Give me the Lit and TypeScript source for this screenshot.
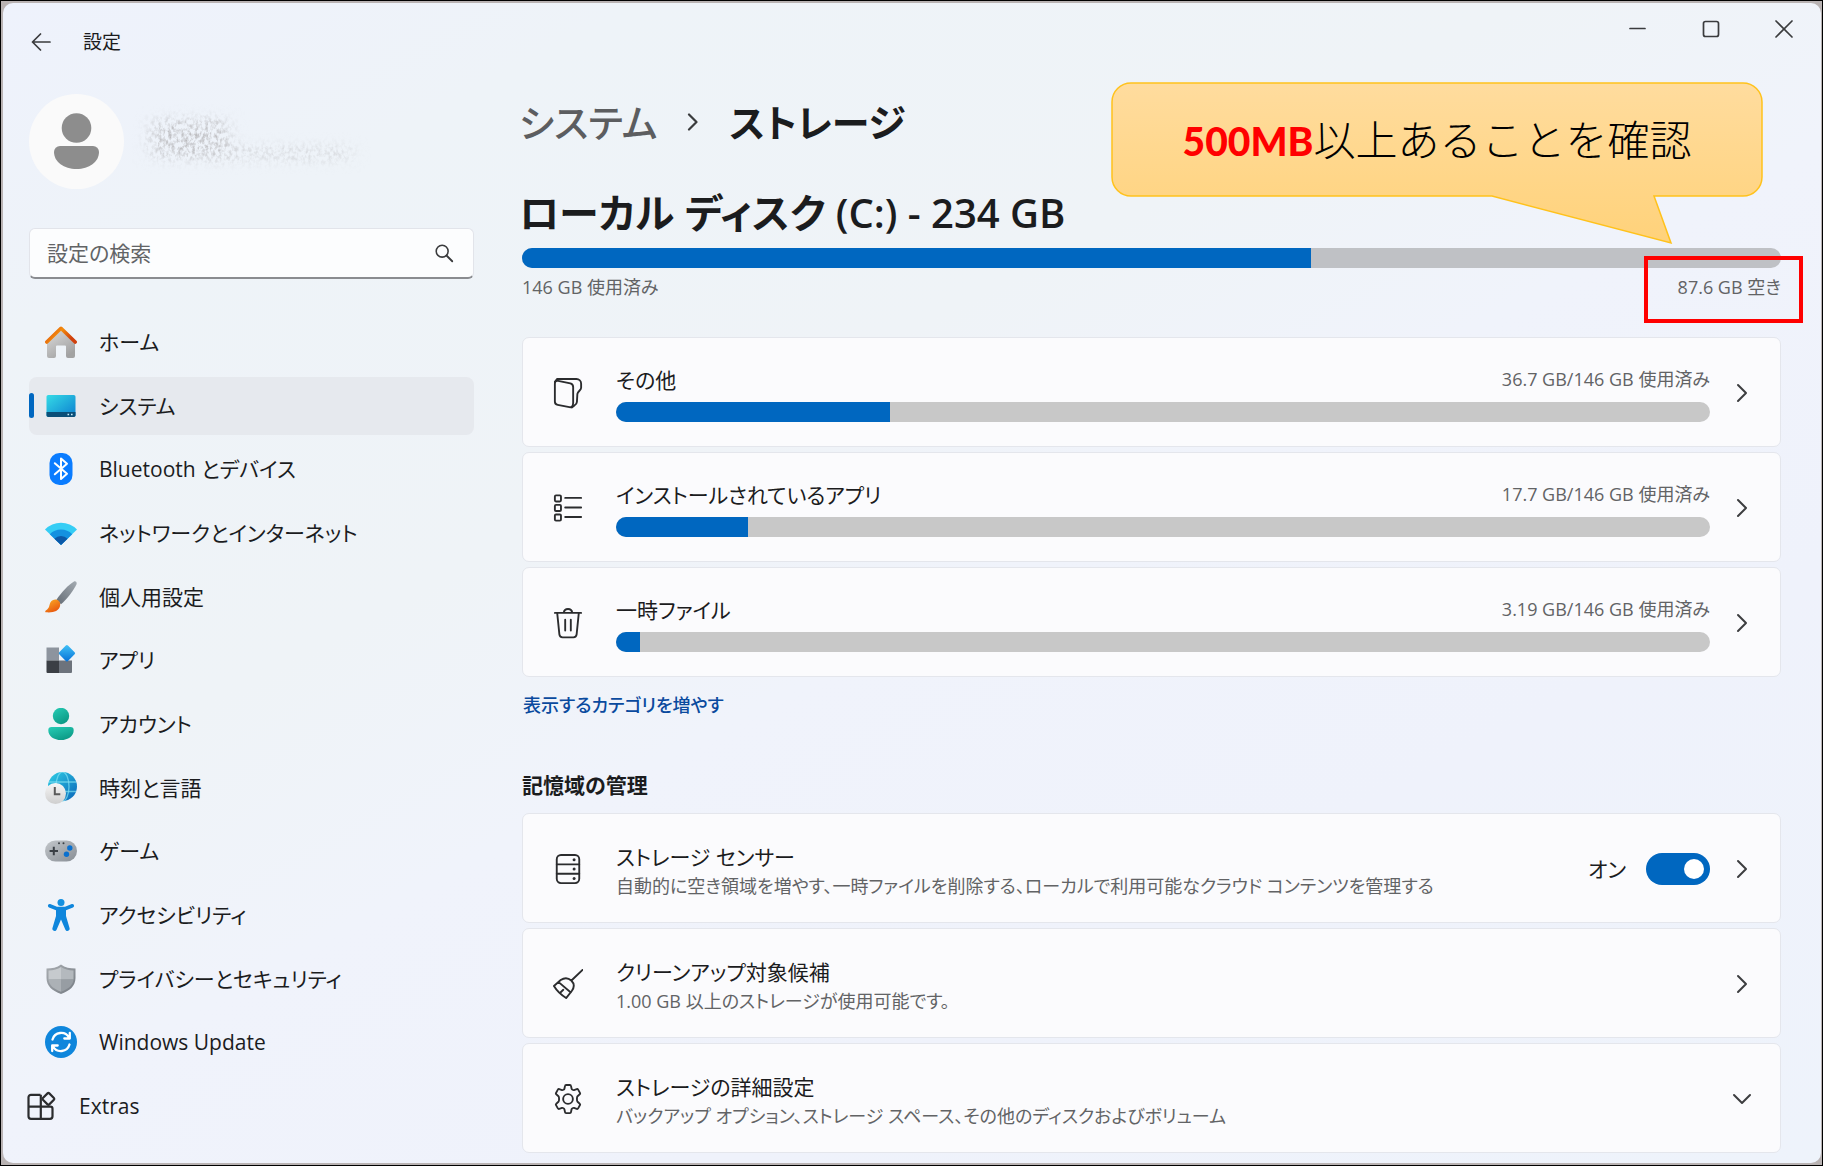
import { LitElement, html, css, svg, nothing } from "lit";
import type { TemplateResult } from "lit";
import { customElement, state } from "lit/decorators.js";
import { classMap } from "lit/directives/class-map.js";
import { styleMap } from "lit/directives/style-map.js";

interface NavEntry {
  label: string;
  icon: TemplateResult;
  extra?: boolean;
}

interface UsageEntry {
  label: string;
  usage: string;
  percent: number;
  icon: TemplateResult;
}

const icon = (content: TemplateResult, cls = "nav-icon") =>
  html`<svg class=${cls} viewBox="0 0 32 32" aria-hidden="true">${content}</svg>`;

const homeIcon = icon(svg`
  <defs>
    <linearGradient id="hr" x1="0" y1="0" x2="1" y2="0.4"><stop offset="0" stop-color="#d9480f"/><stop offset=".5" stop-color="#f38b0c"/><stop offset="1" stop-color="#d0400c"/></linearGradient>
    <linearGradient id="hb" x1="0" y1="0" x2="0.6" y2="1"><stop offset="0" stop-color="#dedede"/><stop offset="1" stop-color="#a2a2a2"/></linearGradient>
  </defs>
  <path d="M2 14 16 3l14 11v16a2 2 0 0 1-2 2h-5a2 2 0 0 1-2-2V20.500a1 1 0 0 0-1-1h-8a1 1 0 0 0-1 1V30a2 2 0 0 1-2 2H4a2 2 0 0 1-2-2Z" fill="url(#hb)"/>
  <path d="M1.800 16 16 2.300 30.200 16" fill="none" stroke="url(#hr)" stroke-width="3.600" stroke-linecap="round" stroke-linejoin="round"/>`);

const systemIcon = icon(svg`
  <defs><linearGradient id="sy" x1="0" y1="0" x2="1" y2="1"><stop offset="0" stop-color="#35dbe6"/><stop offset="1" stop-color="#0c7fd0"/></linearGradient></defs>
  <rect x="1.500" y="5" width="29" height="22" rx="1.800" fill="url(#sy)"/>
  <path d="M1.500 22h29v3.200a1.800 1.800 0 0 1-1.800 1.800H3.300a1.800 1.800 0 0 1-1.800-1.800Z" fill="#0b4f78"/>
  <path d="M22.500 24.500h1.600M26 24.500h1.600" stroke="#c9eefb" stroke-width="1.400"/>`);

const bluetoothIcon = icon(svg`
  <rect x="4.500" y="0" width="23" height="32" rx="10" fill="#0a7cff"/>
  <path d="M9.800 10.200 22 20.800 16 26V5.500l6 5.200L9.800 21.300" fill="none" stroke="#fff" stroke-width="2" stroke-linejoin="round" stroke-linecap="round"/>`);

const networkIcon = icon(svg`
  <path d="M0 12.500a22.500 22.500 0 0 1 32 0L16 28Z" fill="#35cdf5"/>
  <path d="M4.800 17.200a15.800 15.800 0 0 1 22.400 0L16 28Z" fill="#1491e0"/>
  <path d="M9.400 21.700a9.400 9.400 0 0 1 13.200 0L16 28Z" fill="#0c59a8"/>`);

const personalizeIcon = icon(svg`
  <defs>
    <linearGradient id="pb" x1="1" y1="0" x2="0" y2="1"><stop offset="0" stop-color="#a4abb2"/><stop offset="1" stop-color="#646c75"/></linearGradient>
    <linearGradient id="po" x1="0" y1="0" x2="0.6" y2="1"><stop offset="0" stop-color="#fbb128"/><stop offset="1" stop-color="#e8570e"/></linearGradient>
  </defs>
  <path d="M29 .500c1.700-.700 3.200.800 2.500 2.700C29 9 22 18 16 23.300l-4.500-4.600C16 12 23.500 3.600 29 .500Z" fill="url(#pb)"/>
  <path d="M10.800 18.600c3.300.400 5.200 3.600 4.200 6.600-1.400 4.600-6.500 6.800-14 6.100-1-.100-1-1.400-.200-1.900 2-1.100 3.200-2.400 3.700-5.300.700-3.500 3-5.900 6.300-5.500Z" fill="url(#po)"/>`);

const appsIcon = icon(svg`
  <defs><linearGradient id="ap" x1="0" y1="0" x2="1" y2="1"><stop offset="0" stop-color="#41c3f8"/><stop offset="1" stop-color="#0670d6"/></linearGradient></defs>
  <path d="M1.500 3.500h12.500v13H1.500Z" fill="#8d949e"/>
  <path d="M1.500 16.500h12.500v12.500H2.500a1 1 0 0 1-1-1Z" fill="#3b3f45"/>
  <path d="M14 16.500h13V28a1 1 0 0 1-1 1H14Z" fill="#6d737c"/>
  <rect x="15.700" y="3" width="12.400" height="12.400" rx="1.500" transform="rotate(45 21.900 9.200)" fill="url(#ap)"/>`);

const accountIcon = icon(svg`
  <defs><linearGradient id="ac" x1="0" y1="0" x2="0.600" y2="1"><stop offset="0" stop-color="#27cdb6"/><stop offset="1" stop-color="#0c9a86"/></linearGradient></defs>
  <circle cx="16" cy="8" r="8.200" fill="url(#ac)"/>
  <path d="M6.500 19h19a3.200 3.200 0 0 1 3.200 3.200c0 6-5.700 9.800-12.700 9.800S3.300 28.200 3.300 22.200A3.200 3.200 0 0 1 6.500 19Z" fill="url(#ac)"/>`);

const timeIcon = icon(svg`
  <defs>
    <linearGradient id="tg" x1="0" y1="0" x2="1" y2="1"><stop offset="0" stop-color="#2fd0e6"/><stop offset="1" stop-color="#0a63b8"/></linearGradient>
    <linearGradient id="tc" x1="0" y1="0" x2="0" y2="1"><stop offset="0" stop-color="#f6f6f6"/><stop offset="1" stop-color="#cfcfcf"/></linearGradient>
  </defs>
  <circle cx="17.500" cy="14.500" r="14.500" fill="url(#tg)"/>
  <path d="M4 10h27M4 19.500h27" stroke="#7fe0f2" stroke-width="1.300" opacity=".7"/>
  <ellipse cx="17.500" cy="14.500" rx="6.500" ry="14.500" fill="none" stroke="#7fe0f2" stroke-width="1.300" opacity=".7"/>
  <circle cx="10.500" cy="21.500" r="10.500" fill="url(#tc)"/>
  <path d="M9.800 15v7.300h5.500" fill="none" stroke="#5a5a5a" stroke-width="2"/>`);

const gameIcon = icon(svg`
  <defs><linearGradient id="gm" x1="0" y1="0" x2="1" y2="1"><stop offset="0" stop-color="#c3c7cb"/><stop offset="1" stop-color="#878d94"/></linearGradient></defs>
  <rect x="0" y="5.500" width="32" height="21" rx="10.500" fill="url(#gm)"/>
  <path d="M4.600 16h8.400M8.800 11.800v8.400" stroke="#3a3f45" stroke-width="2"/>
  <circle cx="24.800" cy="13" r="2.700" fill="#0a70cf"/><circle cx="21.500" cy="19.300" r="2.700" fill="#0a70cf"/>
  <circle cx="14" cy="8.200" r="1" fill="#3a3f45"/><circle cx="18.500" cy="8.200" r="1" fill="#3a3f45"/>`);

const accessIcon = icon(svg`
  <circle cx="16" cy="3.500" r="3.500" fill="#1390e0"/>
  <path d="M5.200 5.100 12 7.700h8l6.800-2.600c2.200-.700 3.200 2.500 1.200 3.400L21 11.300V17l3.600 12.300c.500 2.500-3.100 3.700-4.200 1.400L16 20.500l-4.400 10.200c-1.100 2.300-4.700 1.100-4.200-1.400L11 17v-5.700L4 8.500c-2-.900-1-4.100 1.200-3.400Z" fill="#0f86dc"/>`);

const shieldIcon = icon(svg`
  <defs><linearGradient id="sh" x1="0" y1="0" x2="1" y2="1"><stop offset="0" stop-color="#a9adb2"/><stop offset="1" stop-color="#757b82"/></linearGradient></defs>
  <path d="M16 1.500c4 3 9 4 14.500 4V15c0 8-6 13-14.500 16C7.500 28 1.500 23 1.500 15V5.500c5.500 0 10.500-1 14.500-4Z" fill="url(#sh)"/>
  <path d="M16 4v12.500H3.500v-9C8.500 7.300 12.500 6.300 16 4Z" fill="#c6cace"/>
  <path d="M16 4v12.500h12.500v-9C23.500 7.300 19.500 6.300 16 4Z" fill="#b4b9be"/>
  <path d="M3.500 16.500H16v12.300C9 26.200 4 22.500 3.500 16.500Z" fill="#acb1b6"/>
  <path d="M28.500 16.500H16v12.300c7-2.600 12-6.300 12.500-12.300Z" fill="#979da3"/>`);

const updateIcon = icon(svg`
  <circle cx="16" cy="16" r="16" fill="#0f86dc"/>
  <g fill="none" stroke="#fff" stroke-width="2.300" stroke-linecap="round" stroke-linejoin="round">
    <path d="M7.500 13.500A9 9 0 0 1 24 11.500M24.800 7v5.500h-5.500"/>
    <path d="M24.500 18.500A9 9 0 0 1 8 20.500M7.200 25v-5.500h5.500"/>
  </g>`);

const extrasIcon = icon(svg`
  <g fill="none" stroke="#2b2c2e" stroke-width="2.200" stroke-linejoin="round">
    <path d="M15.500 4.800H6A2.500 2.500 0 0 0 3.500 7.300v19A2.500 2.500 0 0 0 6 28.800h19a2.500 2.500 0 0 0 2.500-2.500v-7.600a2 2 0 0 0-2-2h-22M15.800 4.800v24"/>
    <path d="M22.500 3.400a1.300 1.300 0 0 1 1.800 0l4.600 4.600a1.300 1.300 0 0 1 0 1.800l-4.600 4.600a1.300 1.300 0 0 1-1.800 0l-4.600-4.600a1.300 1.300 0 0 1 0-1.800Z"/>
  </g>`);

const line = (content: TemplateResult) => icon(content, "line-icon");

const otherIcon = line(svg`
  <path d="M2 4.200 4.500 1H25a5 5 0 0 1 5 5v4.500c0 2.500-3.500 3.500-4 6.500l-.500 8.500c0 2-1.500 3-3 4l-2.500 2"/>
  <path d="M2 6c0-2.200 1.300-3.400 3.500-3l13 2.800A4 4 0 0 1 21.500 9.500v17c0 3.200-1.500 5-4 4.600L5 28.600a3.500 3.500 0 0 1-3-3.500Z"/>`);

const listIcon = line(svg`
  <rect x="2" y="2.500" width="6.500" height="6.500" rx="1.200"/><rect x="2" y="12.700" width="6.500" height="6.500" rx="1.200"/><rect x="2" y="22.900" width="6.500" height="6.500" rx="1.200"/>
  <path d="M13 5.200h17M13 15.400h17M13 25.600h17"/>`);

const trashIcon = line(svg`
  <path d="M2 5.200h28M11.500 5c.300-2.600 2-4 4.500-4s4.200 1.400 4.500 4M4.500 5.500l2.300 22.700a3.500 3.500 0 0 0 3.400 3.100h11.600a3.500 3.500 0 0 0 3.400-3.100l2.300-22.700M13 12.500v11.500M19 12.500v11.500"/>`);

const driveIcon = line(svg`
  <rect x="4" y="1" width="24" height="30" rx="4.500"/><path d="M4 11h24M4 21h24"/>
  <g fill="#2b2c2e" stroke="none"><circle cx="22.500" cy="6" r="1.600"/><circle cx="22.500" cy="16" r="1.600"/><circle cx="22.500" cy="26" r="1.600"/></g>`);

const broomIcon = line(svg`
  <path d="M31.500 1 20.500 11.500M1 18.200 8.200 11.800C12.500 8.800 16.500 9.500 19.500 12.300c3 3 3.500 7.200.500 11.200L14 31C9 27.800 4 23.200 1 18.200ZM6 14l13 11M8.500 24.500l2.500-2.300"/>`);

const gearIcon = line(svg`
  <circle cx="16" cy="16" r="5.200"/>
  <path d="M14 1h4c.600 0 1.100.400 1.200 1l.600 3c.200.900 1.700 1.800 2.600 1.500l2.900-1c.600-.200 1.200 0 1.500.500l2 3.500c.300.500.200 1.100-.300 1.500l-2.300 2c-.900.900-.900 5.100 0 6l2.300 2c.500.400.600 1 .300 1.500l-2 3.500c-.300.500-.900.700-1.500.500l-2.900-1c-.900-.300-2.400.600-2.600 1.500l-.600 3c-.100.600-.600 1-1.200 1h-4c-.600 0-1.100-.400-1.200-1l-.600-3c-.200-.900-1.700-1.800-2.600-1.500l-2.900 1c-.600.200-1.200 0-1.500-.500l-2-3.500c-.300-.500-.200-1.100.300-1.500l2.300-2c.900-.900.900-5.100 0-6l-2.300-2c-.500-.400-.600-1-.300-1.500l2-3.500c.300-.500.900-.700 1.500-.500l2.900 1c.900.300 2.400-.600 2.600-1.500l.600-3c.100-.600.600-1 1.200-1Z"/>`);

const chevronRight = html`<svg class="chevron" viewBox="0 0 20 20" aria-hidden="true"><path d="M6 2l8 8-8 8" /></svg>`;
const chevronDown = html`<svg class="chevron" viewBox="0 0 20 20" aria-hidden="true"><path d="M2 6l8 8 8-8" /></svg>`;

@customElement("app-root")
export class AppRoot extends LitElement {
  @state() private selected = 1;
  @state() private senseOn = true;

  private readonly nav: NavEntry[] = [
    { label: "ホーム", icon: homeIcon },
    { label: "システム", icon: systemIcon },
    { label: "Bluetooth とデバイス", icon: bluetoothIcon },
    { label: "ネットワークとインターネット", icon: networkIcon },
    { label: "個人用設定", icon: personalizeIcon },
    { label: "アプリ", icon: appsIcon },
    { label: "アカウント", icon: accountIcon },
    { label: "時刻と言語", icon: timeIcon },
    { label: "ゲーム", icon: gameIcon },
    { label: "アクセシビリティ", icon: accessIcon },
    { label: "プライバシーとセキュリティ", icon: shieldIcon },
    { label: "Windows Update", icon: updateIcon },
    { label: "Extras", icon: extrasIcon, extra: true },
  ];

  private readonly usage: UsageEntry[] = [
    { label: "その他", usage: "36.7 GB/146 GB 使用済み", percent: 25, icon: otherIcon },
    { label: "インストールされているアプリ", usage: "17.7 GB/146 GB 使用済み", percent: 12.1, icon: listIcon },
    { label: "一時ファイル", usage: "3.19 GB/146 GB 使用済み", percent: 2.2, icon: trashIcon },
  ];

  static styles = css`
    :host {
      display: block;
      font-family: "Open Sans", "Noto Sans CJK JP", sans-serif;
      font-feature-settings: "palt";
      font-size: 21px;
      line-height: 30px;
      color: #1b1c1e;
    }
    * {
      box-sizing: border-box;
    }
    button,
    input {
      font: inherit;
      font-feature-settings: inherit;
      color: inherit;
    }
    button {
      border: 0;
      padding: 0;
      background: none;
      text-align: left;
      cursor: pointer;
    }
    h1, h2, h3 {
      margin: 0;
      font-weight: inherit;
      font-size: inherit;
    }
    .frame {
      min-height: 100vh;
      display: flex;
      border: 1px solid #000;
      padding: 2px 1px 2px 2px;
      background: #b9b3b3;
    }
    .window {
      position: relative;
      flex: 1;
      min-width: 0;
      display: flex;
      flex-direction: column;
      border-radius: 10px;
      background: linear-gradient(152deg, #eef2fc 0%, #eef3f8 16%, #eff3f7 38%, #f0f3fb 52%, #eff2fb 72%, #eef3fb 100%);
    }
    .titlebar {
      display: flex;
      align-items: flex-start;
      height: 77px;
      padding-right: 1px;
    }
    .back {
      display: grid;
      place-items: center;
      width: 76px;
      height: 77px;
    }
    .back svg {
      width: 20px;
      height: 18px;
    }
    .titlebar h1 {
      flex: 1;
      padding-left: 4px;
      font-size: 19px;
      line-height: 78px;
    }
    .caption-button {
      display: grid;
      place-items: center;
      width: 73px;
      height: 52px;
    }
    .caption-button svg {
      width: 18px;
      height: 18px;
    }
    .stroke {
      fill: none;
      stroke: #3a3b3d;
      stroke-width: 1.700;
      stroke-linecap: round;
      stroke-linejoin: round;
    }
    .body {
      flex: 1;
      display: grid;
      grid-template-columns: 445px minmax(0, 1fr);
      column-gap: 48px;
      padding: 0 40px 8px 26px;
    }
    .sidebar {
      display: flex;
      flex-direction: column;
      padding: 14px 0 20px;
    }
    .profile {
      display: flex;
      align-items: center;
      gap: 8px;
      margin-bottom: 39px;
    }
    .avatar {
      width: 95px;
      height: 95px;
    }
    .redacted {
      width: 250px;
      height: 80px;
    }
    .search {
      display: flex;
      align-items: center;
      height: 51px;
      margin-bottom: 34px;
      padding: 0 18px 0 17px;
      border: 1px solid #e2e4ea;
      border-bottom: 2px solid #8a8c90;
      border-radius: 6px;
      background: #fcfdfe;
    }
    .search input {
      flex: 1;
      min-width: 0;
      border: 0;
      padding: 0;
      outline: 0;
      background: none;
    }
    .search input::placeholder {
      color: #626466;
      opacity: 1;
    }
    .search svg {
      width: 22px;
      height: 22px;
    }
    .nav {
      flex: 1;
      display: flex;
      flex-direction: column;
      justify-content: space-between;
    }
    .nav-item {
      display: flex;
      align-items: center;
      gap: 22px;
      height: 58px;
      padding-left: 16px;
      border-radius: 8px;
      color: inherit;
      text-decoration: none;
    }
    .nav-item.extra {
      padding-left: 0;
      margin-left: -4px;
    }
    .nav-item.selected {
      background: #e6e9ee;
    }
    .nav-item.selected::before {
      content: "";
      width: 5px;
      height: 25px;
      margin: 0 -11px 0 -16px;
      border-radius: 3px;
      background: #0067c0;
    }
    .nav-icon {
      flex: none;
      width: 32px;
      height: 32px;
    }
    .breadcrumb {
      display: flex;
      align-items: center;
      gap: 27px;
      padding-top: 12px;
      font-size: 38px;
      line-height: 60px;
    }
    .breadcrumb,
    .drive {
      margin-left: -3px;
    }
    .breadcrumb a {
      color: #5c5d60;
      text-decoration: none;
      font-weight: 500;
    }
    .breadcrumb svg {
      width: 18px;
      height: 18px;
    }
    .current {
      font-weight: 600;
    }
    .drive {
      margin-top: 31px;
      font-size: 40px;
      line-height: 60px;
      font-weight: 600;
    }
    .meter {
      display: block;
      height: 20px;
      border-radius: 10px;
      overflow: hidden;
      background: #c8c8c8;
    }
    .meter.total {
      margin: 5px 0;
      background: #bfc1c5;
    }
    .meter-fill {
      display: block;
      height: 100%;
      background: #0067c0;
    }
    .legend {
      display: flex;
      justify-content: space-between;
    }
    .small {
      font-size: 18px;
      line-height: 28px;
      color: #626365;
    }
    .free {
      position: relative;
    }
    .highlight {
      position: absolute;
      top: -17px;
      right: -22px;
      width: 159px;
      height: 67px;
      border: 4px solid #f00;
    }
    .cards {
      display: flex;
      flex-direction: column;
      gap: 5px;
    }
    .usage-cards {
      margin-top: 36px;
    }
    .card {
      display: grid;
      grid-template-columns: 93px minmax(0, 1fr) auto 64px;
      align-items: center;
      width: 100%;
      height: 110px;
      padding: 2px 6px 0 0;
      border: 1px solid #e4e6ec;
      border-radius: 7px;
      background: #fbfbfd;
    }
    .line-icon {
      width: 30px;
      height: 32px;
      margin-left: 30px;
      fill: none;
      stroke: #2b2c2e;
      stroke-width: 2;
      stroke-linecap: round;
      stroke-linejoin: round;
    }
    .chevron {
      justify-self: center;
      display: block;
      width: 20px;
      height: 20px;
      margin: 0 auto;
      fill: none;
      stroke: #3c3d3f;
      stroke-width: 2;
      stroke-linecap: round;
      stroke-linejoin: round;
    }
    .text {
      display: flex;
      flex-direction: column;
    }
    .setting-text {
      padding-top: 3px;
    }
    .usage-text {
      gap: 7px;
      grid-column: 2 / 4;
    }
    .usage-head {
      display: flex;
      justify-content: space-between;
    }
    .more {
      display: block;
      width: fit-content;
      margin: 14px 0 0 1px;
      font-size: 18px;
      line-height: 28px;
      font-weight: 500;
      color: #0a4a9e;
      text-decoration: none;
    }
    .section-title {
      margin: 51px 0 13px;
      font-weight: 600;
    }
    .toggle {
      display: flex;
      align-items: center;
      gap: 20px;
    }
    .toggle input {
      appearance: none;
      width: 64px;
      height: 32px;
      margin: 0;
      padding: 6px;
      border-radius: 16px;
      background: #8a8c90;
      display: flex;
      align-items: center;
      cursor: pointer;
    }
    .toggle input::before {
      content: "";
      width: 20px;
      height: 20px;
      border-radius: 50%;
      background: #fff;
    }
    .toggle input:checked {
      justify-content: flex-end;
      background: #0067c0;
    }
    .callout {
      position: absolute;
      top: 79px;
      right: 57px;
      width: 654px;
      height: 163px;
      font-family: "Noto Sans CJK JP", sans-serif;
      font-feature-settings: normal;
      font-size: 42px;
      font-weight: 300;
      line-height: 112px;
      text-align: center;
      color: #000;
    }
    .callout svg {
      position: absolute;
      inset: 0;
      width: 654px;
      height: 163px;
    }
    .callout p {
      position: relative;
      margin: 0;
    }
    .callout strong {
      font-family: Lato, sans-serif;
      font-size: 39px;
      font-weight: 900;
      color: #f00;
    }
  `;

  private renderNavItem(item: NavEntry, index: number) {
    const selected = index === this.selected;
    return html`<a
      href="#"
      class=${classMap({ "nav-item": true, selected, extra: !!item.extra })}
      aria-current=${selected ? "page" : nothing}
      @click=${(e: Event) => {
        e.preventDefault();
        this.selected = index;
      }}
      >${item.icon}<span>${item.label}</span></a
    >`;
  }

  private renderMeter(percent: number, label: string, total = false) {
    return html`<span
      class=${classMap({ meter: true, total })}
      role="progressbar"
      aria-label=${label}
      aria-valuenow=${percent}
      ><span class="meter-fill" style=${styleMap({ width: `${percent}%` })}></span
    ></span>`;
  }

  private renderUsage(item: UsageEntry) {
    return html`<button class="card" type="button">
      ${item.icon}
      <span class="text usage-text">
        <span class="usage-head"><span>${item.label}</span><span class="small">${item.usage}</span></span>
        ${this.renderMeter(item.percent, item.label)}
      </span>
      ${chevronRight}
    </button>`;
  }

  render() {
    return html`
      <div class="frame">
        <div class="window">
          <header class="titlebar">
            <button class="back" type="button" aria-label="戻る">
              <svg class="stroke" viewBox="0 0 20 18"><path d="M19 9H1.500M9.500 1 1.500 9l8 8" /></svg>
            </button>
            <h1>設定</h1>
            <button class="caption-button" type="button" aria-label="最小化">
              <svg class="stroke" viewBox="0 0 18 18"><path d="M1 8.500h15" /></svg>
            </button>
            <button class="caption-button" type="button" aria-label="最大化">
              <svg class="stroke" viewBox="0 0 18 18"><rect x="1.500" y="1.500" width="15" height="15" rx="2" /></svg>
            </button>
            <button class="caption-button" type="button" aria-label="閉じる">
              <svg class="stroke" viewBox="0 0 18 18"><path d="M1 1l16 16M17 1 1 17" /></svg>
            </button>
          </header>

          <div class="body">
            <aside class="sidebar">
              <div class="profile">
                <svg class="avatar" viewBox="0 0 95 95" aria-hidden="true">
                  <circle cx="47.500" cy="47.500" r="47.500" fill="#fafafa" />
                  <circle cx="47.500" cy="34" r="14.800" fill="#8d8d8d" />
                  <path d="M31 52h33a6 6 0 0 1 6 6c0 10-10 17-22.500 17S25 68 25 58a6 6 0 0 1 6-6Z" fill="#8d8d8d" />
                </svg>
                <svg class="redacted" viewBox="0 0 250 80" aria-hidden="true">
                  <defs>
                    <filter id="grain" filterUnits="userSpaceOnUse" x="0" y="0" width="250" height="80">
                      <feTurbulence type="fractalNoise" baseFrequency="0.3 0.22" numOctaves="3" seed="4" result="n" />
                      <feColorMatrix in="n" values="0 0 0 0 .5  0 0 0 0 .5  0 0 0 0 .52  2.600 0 0 0 -1.050" result="g" />
                      <feGaussianBlur in="SourceGraphic" stdDeviation="9 7" result="s" />
                      <feComposite in="g" in2="s" operator="in" />
                    </filter>
                  </defs>
                  <g filter="url(#grain)">
                    <rect x="20" y="18" width="76" height="38" />
                    <rect x="70" y="46" width="150" height="11" opacity=".7" />
                  </g>
                </svg>
              </div>

              <label class="search">
                <input type="text" aria-label="設定の検索" placeholder="設定の検索" />
                <svg class="stroke" viewBox="0 0 24 24" aria-hidden="true">
                  <circle cx="10" cy="10" r="6.500" /><path d="m15 15 6 6" stroke-width="2" />
                </svg>
              </label>

              <nav class="nav" aria-label="設定">${this.nav.map((item, i) => this.renderNavItem(item, i))}</nav>
            </aside>

            <main>
              <div class="breadcrumb">
                <a href="#">システム</a>
                <svg class="stroke" viewBox="0 0 18 18" aria-hidden="true"><path d="M5 1.500 12.500 9 5 16.500" stroke-width="2.200" /></svg>
                <span class="current">ストレージ</span>
              </div>
              <h2 class="drive">ローカル ディスク (C:) - 234 GB</h2>
              ${this.renderMeter(62.7, "ローカル ディスク (C:)", true)}
              <div class="legend small">
                <span>146 GB 使用済み</span>
                <span class="free">87.6 GB 空き<span class="highlight"></span></span>
              </div>

              <div class="cards usage-cards">${this.usage.map((item) => this.renderUsage(item))}</div>
              <a class="more" href="#">表示するカテゴリを増やす</a>

              <h3 class="section-title">記憶域の管理</h3>
              <div class="cards">
                <div class="card">
                  ${driveIcon}
                  <span class="text setting-text">
                    <span>ストレージ センサー</span>
                    <span class="small">自動的に空き領域を増やす、一時ファイルを削除する、ローカルで利用可能なクラウド コンテンツを管理する</span>
                  </span>
                  <label class="toggle"
                    ><span>${this.senseOn ? "オン" : "オフ"}</span
                    ><input
                      type="checkbox"
                      role="switch"
                      aria-label="ストレージ センサー"
                      .checked=${this.senseOn}
                      @change=${(e: Event) => (this.senseOn = (e.target as HTMLInputElement).checked)}
                  /></label>
                  <button type="button" aria-label="ストレージ センサーを開く">${chevronRight}</button>
                </div>
                <button class="card" type="button">
                  ${broomIcon}
                  <span class="text setting-text">
                    <span>クリーンアップ対象候補</span>
                    <span class="small">1.00 GB 以上のストレージが使用可能です。</span>
                  </span>
                  <span></span>${chevronRight}
                </button>
                <button class="card" type="button" aria-expanded="false">
                  ${gearIcon}
                  <span class="text setting-text">
                    <span>ストレージの詳細設定</span>
                    <span class="small">バックアップ オプション、ストレージ スペース、その他のディスクおよびボリューム</span>
                  </span>
                  <span></span>${chevronDown}
                </button>
              </div>
            </main>
          </div>

          <div class="callout" role="note">
            <svg viewBox="0 0 654 163" aria-hidden="true">
              <defs>
                <linearGradient id="bubble" x1="0" y1="0" x2="0" y2="1">
                  <stop offset="0" stop-color="#ffdc9e" /><stop offset="1" stop-color="#ffd27a" />
                </linearGradient>
              </defs>
              <path
                d="M21 1H633a19 19 0 0 1 19 19V95a19 19 0 0 1-19 19H544L561 161 382 114H21A19 19 0 0 1 2 95V20A19 19 0 0 1 21 1Z"
                fill="url(#bubble)"
                stroke="#ffc21c"
                stroke-width="1.500"
              />
            </svg>
            <p><strong>500MB</strong>以上あることを確認</p>
          </div>
        </div>
      </div>
    `;
  }
}
